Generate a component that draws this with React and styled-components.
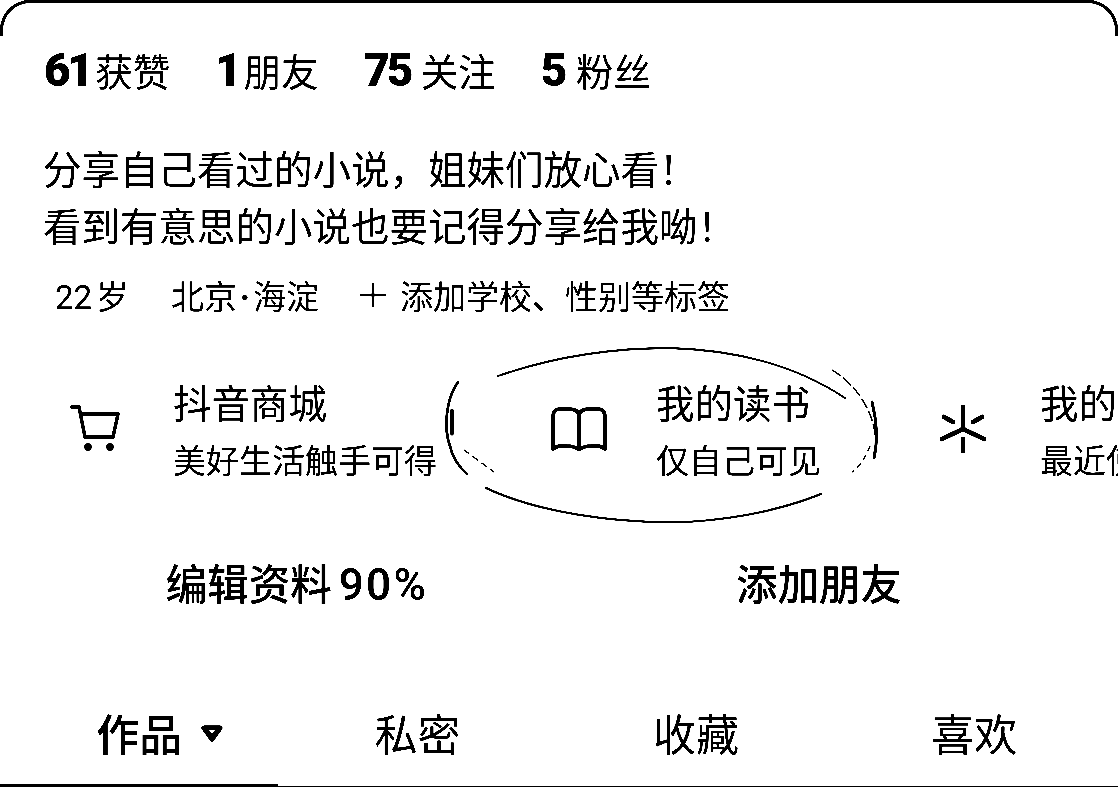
import React from "react";
import styled, { createGlobalStyle } from "styled-components";

const Global = createGlobalStyle`
  html, body { margin: 0; padding: 0; background: #fff; }
  body { font-family: "Noto Sans CJK SC", "Noto Sans", sans-serif; color: #000; }
`;

const Page = styled.div`
  position: relative;
  width: 1118px;
  height: 787px;
  overflow: hidden;
  background: #fff;
  filter: grayscale(1) brightness(0.88) contrast(7);
`;

const Card = styled.main`
  position: relative;
  box-sizing: border-box;
  height: 787px;
  background: #fff;
  display: flex;
  flex-direction: column;
  padding-top: 3px;
  &::before {
    content: "";
    position: absolute;
    left: 0;
    right: 0;
    top: 0;
    height: 36px;
    box-sizing: border-box;
    border: 3px solid #000;
    border-bottom: 0;
    border-radius: 30px 30px 0 0;
  }
`;

const Stats = styled.section`
  display: flex;
  align-items: center;
  gap: 45px;
  height: 50px;
  margin-top: 42px;
  padding-left: 44px;
`;

const Stat = styled.div`
  display: flex;
  align-items: baseline;
  gap: ${(p) => p.$gap ?? 12}px;
  font-size: 37.5px;
  line-height: 50px;
  white-space: nowrap;
`;

const Num = styled.b`
  font-family: Roboto, sans-serif;
  font-weight: 900;
  font-size: 46px;
  letter-spacing: -3.5px;
`;

const Bio = styled.p`
  margin: 44px 0 0;
  padding-left: 43px;
  font-size: 38.5px;
  line-height: 57px;
  white-space: nowrap;
`;

const Meta = styled.div`
  display: flex;
  align-items: center;
  gap: 42px;
  height: 46px;
  margin-top: 19px;
  padding-left: 55px;
  font-size: 33px;
  white-space: nowrap;
`;

const Digits = styled.span`
  font-family: Roboto, sans-serif;
  margin-right: 4px;
`;

const Dot = styled.span`
  font-family: Roboto, sans-serif;
  font-weight: 700;
  margin: 0 3px;
`;

const AddTag = styled.span`
  display: flex;
  align-items: center;
  gap: 14px;
  margin-left: -1px;
`;

const Services = styled.section`
  display: flex;
  align-items: center;
  gap: 110px;
  height: 122px;
  margin-top: 50px;
  padding-left: 64px;
  overflow: hidden;
  white-space: nowrap;
`;

const Service = styled.div`
  display: flex;
  align-items: center;
  gap: 45px;
  flex: none;
`;

const IconBox = styled.div`
  width: 64px;
  height: 64px;
  display: flex;
  align-items: center;
  justify-content: center;
`;

const ServiceText = styled.div`
  display: flex;
  flex-direction: column;
  gap: 9px;
`;

const ServiceTitle = styled.div`
  font-size: 38.5px;
  line-height: 50px;
`;

const ServiceSub = styled.div`
  font-size: 33px;
  line-height: 48px;
`;

const Actions = styled.section`
  display: grid;
  grid-template-columns: 510px 510px;
  gap: 12px;
  padding: 0 42px;
  margin-top: 64px;
`;

const Action = styled.div`
  text-align: center;
  font-size: 41.5px;
  line-height: 56px;
  font-weight: 500;
  white-space: nowrap;
`;

const Pct = styled.span`
  font-family: Roboto, sans-serif;
  font-weight: 500;
  font-size: 44px;
  letter-spacing: 2.4px;
  margin-left: 7px;
`;

const Tabs = styled.nav`
  display: grid;
  grid-template-columns: repeat(4, 278.4px);
  margin-top: 89px;
  height: 84px;
  border-bottom: 1px solid #000;
`;

const Tab = styled.div`
  position: relative;
  text-align: center;
  font-size: 43px;
  line-height: 60px;
  font-weight: ${(p) => (p.$active ? 500 : 400)};
  ${(p) =>
    p.$active &&
    `&::after { content: ""; position: absolute; left: 0; right: 0; bottom: -1px; height: 3px; background: #000; }`}
`;

const Caret = styled.svg`
  position: absolute;
  left: 200px;
  top: 22px;
`;

const Ring = styled.svg`
  position: absolute;
  left: 440px;
  top: 340px;
  pointer-events: none;
`;

const PlusIcon = () => (
  <svg width="26" height="26" viewBox="0 0 26 26" stroke="#000" strokeWidth="2.4">
    <path d="M0 13h26M13 1v24" />
  </svg>
);

const CartIcon = () => (
  <svg width="52" height="52" viewBox="0 0 52 52" fill="none" stroke="#000" strokeWidth="3.4" strokeLinecap="round" strokeLinejoin="round">
    <path d="M2 4h7l6 30h28l5-23H11" />
    <circle cx="18" cy="44" r="2" fill="#000" />
    <circle cx="40" cy="44" r="2" fill="#000" />
  </svg>
);

const BookIcon = () => (
  <svg width="58" height="44" viewBox="0 0 58 44" fill="none" stroke="#000" strokeWidth="3.6" strokeLinejoin="round">
    <path d="M29 10C29 4 25 2 19 2H10C5 2 3 5 3 10v32c4-3 8-4 13-3 6 0 10 1 13 4 3-3 7-4 13-4 5-1 9 0 13 3V10c0-5-2-8-7-8h-9c-6 0-10 2-10 8v33" />
  </svg>
);

const SparkIcon = () => (
  <svg width="48" height="50" viewBox="0 0 48 50" fill="none" stroke="#000" strokeWidth="4.6" strokeLinecap="round">
    <path d="M24 3v22M24 25L3 35M24 25l21 10M5 13l9 5M43 13l-9 5M24 35v12" />
  </svg>
);

const HandRing = () => (
  <Ring width="450" height="190" viewBox="0 0 450 190" fill="none" stroke="#000" strokeLinecap="round">
    <path d="M58 36C110 18 170 8 230 8c70 2 130 20 175 50" strokeWidth="1.8" />
    <path d="M392 30c30 18 45 50 44 78" strokeWidth="1.4" strokeDasharray="10 4" />
    <path d="M432 62c5 20 6 38 2 56" strokeWidth="2.8" />
    <path d="M430 106c-5 12-10 20-18 26" strokeWidth="1.2" strokeDasharray="5 5" />
    <path d="M18 42C5 60 4 90 10 106c2 10 8 20 17 28" strokeWidth="2.6" />
    <path d="M24 110l30 22" strokeWidth="1.2" strokeDasharray="6 5" />
    <path d="M46 148c50 24 130 36 200 34 50-3 95-12 135-28" strokeWidth="2" />
    <path d="M12 70v24" strokeWidth="3.2" />
  </Ring>
);

export default function App() {
  return (
    <>
      <Global />
      <Page>
        <Card>
          <Stats>
            <Stat $gap={5}><Num>61</Num><span>获赞</span></Stat>
            <Stat $gap={5}><Num>1</Num><span>朋友</span></Stat>
            <Stat $gap={11}><Num>75</Num><span>关注</span></Stat>
            <Stat $gap={12}><Num>5</Num><span>粉丝</span></Stat>
          </Stats>
          <Bio>
            分享自己看过的小说，姐妹们放心看！
            <br />
            看到有意思的小说也要记得分享给我呦！
          </Bio>
          <Meta>
            <span><Digits>22</Digits>岁</span>
            <span>北京<Dot>·</Dot>海淀</span>
            <AddTag><PlusIcon /><span>添加学校、性别等标签</span></AddTag>
          </Meta>
          <Services>
            <Service>
              <IconBox><CartIcon /></IconBox>
              <ServiceText>
                <ServiceTitle>抖音商城</ServiceTitle>
                <ServiceSub>美好生活触手可得</ServiceSub>
              </ServiceText>
            </Service>
            <Service>
              <IconBox><BookIcon /></IconBox>
              <ServiceText>
                <ServiceTitle>我的读书</ServiceTitle>
                <ServiceSub>仅自己可见</ServiceSub>
              </ServiceText>
            </Service>
            <Service>
              <IconBox><SparkIcon /></IconBox>
              <ServiceText>
                <ServiceTitle>我的小程序</ServiceTitle>
                <ServiceSub>最近使用的小程序</ServiceSub>
              </ServiceText>
            </Service>
          </Services>
          <Actions>
            <Action>编辑资料<Pct>90%</Pct></Action>
            <Action>添加朋友</Action>
          </Actions>
          <Tabs>
            <Tab $active>
              作品
              <Caret width="24" height="20" viewBox="0 0 24 20">
                <path d="M4 4h16L12 15z" fill="#000" stroke="#000" strokeWidth="5" strokeLinejoin="round" />
                <path d="M9 6h6l-3 4z" fill="#fff" />
              </Caret>
            </Tab>
            <Tab>私密</Tab>
            <Tab>收藏</Tab>
            <Tab>喜欢</Tab>
          </Tabs>
        </Card>
        <HandRing />
      </Page>
    </>
  );
}
